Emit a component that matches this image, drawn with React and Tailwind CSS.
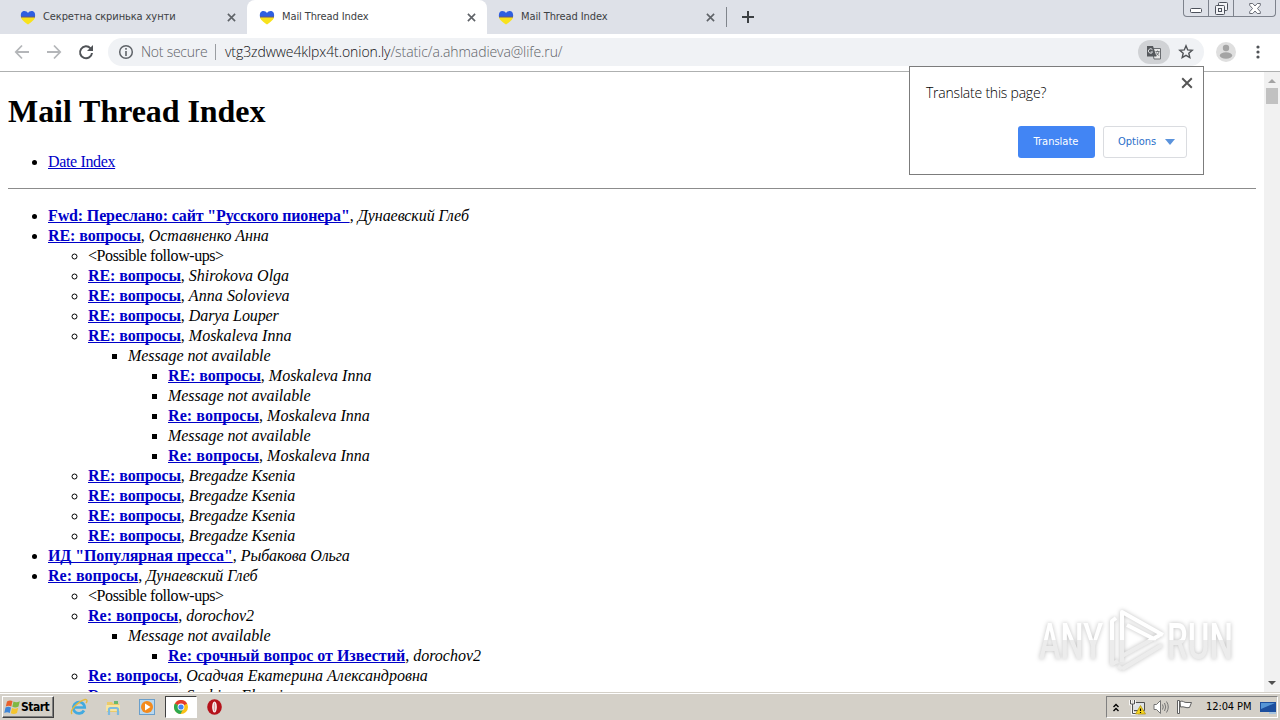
import React from 'react';

const tabs = [
  { title: 'Секретна скринька хунти', width: 'w-[239px]' },
  { title: 'Mail Thread Index', width: 'w-[240px] rounded-t-lg bg-white' },
  { title: 'Mail Thread Index', width: '-ml-px w-[240px]' }
];

const missing = 'Message not available';

const threads = [
  {
    subject: 'Fwd: Переслано: сайт "Русского пионера"',
    author: 'Дунаевский Глеб',
    spacing: 'tracking-[-0.14px]',
    authorSpacing: 'tracking-[-0.06px]'
  },
  {
    subject: 'RE: вопросы',
    author: 'Оставненко Анна',
    authorSpacing: 'tracking-[-0.06px]',
    replies: [
      { text: '<Possible follow-ups>' },
      { subject: 'RE: вопросы', author: 'Shirokova Olga' },
      { subject: 'RE: вопросы', author: 'Anna Solovieva', authorSpacing: 'tracking-[0.06px]' },
      { subject: 'RE: вопросы', author: 'Darya Louper', authorSpacing: 'tracking-[-0.1px]' },
      {
        subject: 'RE: вопросы',
        author: 'Moskaleva Inna',
        replies: [
          {
            note: missing,
            replies: [
              { subject: 'RE: вопросы', author: 'Moskaleva Inna' },
              { note: missing },
              { subject: 'Re: вопросы', author: 'Moskaleva Inna', spacing: 'tracking-[0.08px]' },
              { note: missing },
              { subject: 'Re: вопросы', author: 'Moskaleva Inna', spacing: 'tracking-[0.08px]' }
            ]
          }
        ]
      },
      { subject: 'RE: вопросы', author: 'Bregadze Ksenia', authorSpacing: 'tracking-[-0.13px]' },
      { subject: 'RE: вопросы', author: 'Bregadze Ksenia', authorSpacing: 'tracking-[-0.13px]' },
      { subject: 'RE: вопросы', author: 'Bregadze Ksenia', authorSpacing: 'tracking-[-0.13px]' },
      { subject: 'RE: вопросы', author: 'Bregadze Ksenia', authorSpacing: 'tracking-[-0.13px]' }
    ]
  },
  { subject: 'ИД "Популярная пресса"', author: 'Рыбакова Ольга', authorSpacing: 'tracking-[-0.1px]' },
  {
    subject: 'Re: вопросы',
    author: 'Дунаевский Глеб',
    spacing: 'tracking-normal',
    authorSpacing: 'tracking-[-0.06px]',
    replies: [
      { text: '<Possible follow-ups>' },
      {
        subject: 'Re: вопросы',
        author: 'dorochov2',
        spacing: 'tracking-normal',
        replies: [
          {
            note: missing,
            replies: [
              { subject: 'Re: срочный вопрос от Известий', author: 'dorochov2', spacing: 'tracking-normal' }
            ]
          }
        ]
      },
      { subject: 'Re: вопросы', author: 'Осадчая Екатерина Александровна', spacing: 'tracking-normal' },
      { subject: 'Re: вопросы', author: 'Sechina Elenai', spacing: 'tracking-normal' }
    ]
  }
];

const listStyles = ['list-disc', 'list-[circle]', 'list-[square]', 'list-[square]'];

const ThreadList = ({ items, depth = 0 }) => (
  <ul className={`pl-10 ${listStyles[depth]}`}>
    {items.map((item, index) => (
      <li key={index} className="whitespace-nowrap">
        {item.text && <span className="tracking-[-0.43px]">{item.text}</span>}
        {item.note && <em className="tracking-[-0.07px]">{item.note}</em>}
        {item.subject && (
          <>
            <a
              className={`font-bold text-[#0000c8] underline [text-decoration-skip-ink:none] ${item.spacing || 'tracking-[-0.09px]'}`}
            >
              {item.subject}
            </a>
            , <em className={item.authorSpacing}>{item.author}</em>
          </>
        )}
        {item.replies && <ThreadList items={item.replies} depth={depth + 1} />}
      </li>
    ))}
  </ul>
);

const HeartIcon = () => (
  <svg width="16" height="16" viewBox="0 0 16 16" className="shrink-0">
    <path d="M8 15.500C4 12.500 1 10.500 1 8h14c0 2.500-3 4.500-7 7.500z" fill="#f8e21c" />
    <path d="M1 8C.3 4 2 2 4.300 2 6 2 7.300 2.800 8 4c.7-1.200 2-2 3.700-2C14 2 15.700 4 15 8z" fill="#2f5fe0" />
    <path d="M1 7.500h14v1H1z" fill="#6a5a78" />
  </svg>
);

const CloseIcon = ({ size = 9, color = '#5f6368', weight = 1.8 }) => (
  <svg width={size} height={size} viewBox="0 0 10 10" className="shrink-0">
    <path d="M1 1l8 8M9 1L1 9" stroke={color} strokeWidth={weight} />
  </svg>
);

const Tab = ({ title, width }) => (
  <div className={`flex h-[34px] items-center pl-3 pr-[11px] ${width}`}>
    <HeartIcon />
    <span className="ml-[7px] flex-1 whitespace-nowrap pt-px text-[11px] tracking-[-0.1px] text-[#3c4043]">{title}</span>
    <CloseIcon />
  </div>
);

const WindowButtons = () => (
  <div className="ml-auto mr-[4px] flex h-[17px] self-start rounded-b-[4px] border border-t-0 border-[#7d828c]">
    <div className="flex w-[25px] items-center justify-center border-r border-[#7d828c]">
      <svg width="12" height="14" viewBox="0 0 12 14">
        <rect x=".5" y="7.500" width="11" height="4" rx="1" fill="#fff" stroke="#4c515b" />
      </svg>
    </div>
    <div className="flex w-[25px] items-center justify-center border-r border-[#7d828c]">
      <svg width="13" height="13" viewBox="0 0 13 13" fill="#f2f3f6" stroke="#4c515b">
        <rect x="3.500" y=".5" width="9" height="8" rx="1" />
        <rect x=".5" y="3.500" width="9" height="9" rx="1" />
        <rect x="3.500" y="6.500" width="3" height="3" />
      </svg>
    </div>
    <div className="flex w-[41px] items-center justify-center">
      <svg width="12" height="11" viewBox="0 0 12 11">
        <path
          d="M.7.500h3L6 3l2.300-2.500h3v1.800L8.500 5.500l2.800 3.200v1.800h-3L6 8l-2.300 2.500h-3V8.700l2.800-3.200L.7 2.300z"
          fill="#fff"
          stroke="#5b606a"
          strokeWidth=".9"
        />
      </svg>
    </div>
  </div>
);

const Toolbar = () => (
  <div className="flex h-[38px] items-center border-b border-[#aeb0b0] bg-white pb-px pl-[14px] pr-[16px]">
    <svg width="82" height="18" viewBox="0 0 82 18" fill="none" strokeWidth="1.800" className="shrink-0">
      <path d="M15 9H2M8 2.500L1.800 9 8 15.500" stroke="#b4b6b9" />
      <path d="M33 9h13M40 2.500L46.200 9 40 15.500" stroke="#b4b6b9" />
      <path d="M76.500 5.300A6 6 0 1 0 78 10" stroke="#505357" strokeWidth="2" />
      <path d="M79 2v6h-6z" fill="#505357" />
    </svg>
    <div className="ml-[12px] flex h-[28px] w-[1096px] items-center rounded-full bg-[#f0f2f5] pl-[10px]">
      <svg width="16" height="16" viewBox="0 0 16 16" className="shrink-0">
        <circle cx="8" cy="8" r="6.300" fill="none" stroke="#5f6368" strokeWidth="1.500" />
        <path d="M8 4v1.800M8 7v5" stroke="#5f6368" strokeWidth="1.600" />
      </svg>
      <span className="ml-[7px] w-[67px] whitespace-nowrap pb-px font-['Open_Sans','Noto_Sans',sans-serif] text-[14px] font-light tracking-[-0.25px] text-[#5f6368]">
        Not secure
      </span>
      <span className="ml-[7px] h-4 w-px bg-[#9a9da1]" />
      <span className="ml-[9px] whitespace-nowrap pb-px font-['Open_Sans','Noto_Sans',sans-serif] text-[14px] font-light tracking-[-0.08px] text-[#5f6368]">
        <span className="text-[#101114]">vtg3zdwwe4klpx4t.onion.ly</span>/static/a.ahmadieva@life.ru/
      </span>
      <span className="ml-auto flex h-6 w-8 items-center justify-center rounded-full bg-[#d0d2d5]">
        <svg width="16" height="15" viewBox="0 0 16 15">
          <path d="M6 3.500h8.500v10.500H8z" fill="#e8e8e8" stroke="#6a6d71" />
          <path d="M1 1h6l3.500 10.500H1z" fill="#55585c" />
          <path d="M6.500 4.800A2.200 2.200 0 1 0 6.600 7H4.700" fill="none" stroke="#e1e3e6" />
          <path d="M9.500 6.500h4M11.500 5.500v1M13 6.500c-.3 2-1.500 3.300-3 4M10.500 7.500c.5 1.500 1.500 2.500 2.700 3" fill="none" stroke="#6a6d71" strokeWidth=".9" />
        </svg>
      </span>
      <svg width="16" height="16" viewBox="0 0 16 16" className="ml-2 mr-[10px]">
        <path
          d="M8 1.800l1.700 4.100 4.500.4-3.400 2.900 1 4.400L8 11.300l-3.800 2.300 1-4.400-3.400-2.900 4.500-.4z"
          fill="none"
          stroke="#505357"
          strokeWidth="1.400"
        />
      </svg>
    </div>
    <svg width="20" height="20" viewBox="0 0 20 20" className="ml-[12px]">
      <circle cx="10" cy="10" r="10" fill="#dfdfdf" />
      <circle cx="10" cy="6" r="3.200" fill="#a4a4a4" />
      <ellipse cx="10" cy="13.500" rx="6.200" ry="3.300" fill="#a4a4a4" />
    </svg>
    <svg width="4" height="14" viewBox="0 0 4 14" fill="#505357" className="ml-auto mr-[4px]">
      <circle cx="2" cy="2" r="1.600" />
      <circle cx="2" cy="7" r="1.600" />
      <circle cx="2" cy="12" r="1.600" />
    </svg>
  </div>
);

const TranslatePopup = () => (
  <div className="absolute left-[909px] top-[66px] flex h-[109px] w-[295px] flex-col border border-[#7c7c7c] bg-white">
    <div className="flex h-[36px] items-start justify-between pl-[16px] pr-[10px] pt-[10px]">
      <span className="mt-[6px] font-['Open_Sans','Noto_Sans',sans-serif] text-[14px] font-light leading-5 tracking-[-0.22px] text-black">
        Translate this page?
      </span>
      <CloseIcon size={12} color="#555" weight={1.6} />
    </div>
    <div className="mt-[23px] flex justify-end gap-2 pr-4 text-[11px]">
      <button className="h-8 w-[77px] rounded-[3px] bg-[#4285f4] pr-px text-white">Translate</button>
      <button className="flex h-8 w-[84px] items-center justify-between rounded-[3px] border border-[#dadce0] pl-[14px] pr-[11px] text-[#2a6fc9]">
        Options
        <svg width="10" height="6" viewBox="0 0 10 6">
          <path d="M0 0h10L5 6z" fill="#5a93dc" />
        </svg>
      </button>
    </div>
  </div>
);

const Scrollbar = () => (
  <div className="flex w-4 shrink-0 flex-col items-center bg-[#f1f1f1]">
    <svg width="16" height="16" viewBox="0 0 16 16">
      <path d="M4 11h8L8 7z" fill="#a3a3a3" />
    </svg>
    <div className="h-4 w-3 bg-[#c1c1c1]" />
    <svg width="16" height="16" viewBox="0 0 16 16" className="mt-auto">
      <path d="M4 5h8L8 9z" fill="#505050" />
    </svg>
  </div>
);

const Watermark = () => (
  <svg
    width="210"
    height="80"
    viewBox="0 0 210 80"
    className="absolute left-[1030px] top-[600px] drop-shadow-[0_0_2px_rgba(0,0,0,0.25)]"
  >
    <defs>
      <linearGradient id="split" gradientUnits="userSpaceOnUse" x1="0" y1="0" x2="0" y2="80">
        <stop offset=".5" stopColor="#ffffff" />
        <stop offset=".5" stopColor="#ececec" />
      </linearGradient>
    </defs>
    <g fill="url(#split)" fontSize="50" fontWeight="500" fontFamily="Roboto, 'Liberation Sans', sans-serif">
      <text x="9" y="59" textLength="64" lengthAdjust="spacingAndGlyphs">ANY</text>
      <text x="137" y="59" textLength="66" lengthAdjust="spacingAndGlyphs">RUN</text>
    </g>
    <g fill="none" stroke="url(#split)" strokeWidth="4" strokeLinejoin="round">
      <path d="M92 56V12l41 23M97 25l29 15M92 56l38-21" />
      <path d="M86 18l-4 3v43l6-3M92 69l40-24M92 62V18M92 69l-4-3" />
    </g>
  </svg>
);

const StartFlag = () => (
  <svg width="17" height="16" viewBox="0 0 17 16">
    <path d="M3 2.500C5 1 7 1.200 8.500 2L7.300 7.500C5.500 6.500 3.700 6.600 1.800 7.500z" fill="#e8602c" />
    <path d="M9.500 2.500c2 1 4 1 6.300-.3L14.500 7.500c-2 1.200-4 1.200-6.200.3z" fill="#7fb842" />
    <path d="M1.500 8.500c2-1 3.700-1 5.500 0L5.800 14C4 13 2.200 13 .3 14z" fill="#3f86d8" />
    <path d="M8 9c2 1 4 1 6.200-.2L13 14c-2 1.200-4.200 1.200-6.200.3z" fill="#f5c52e" />
  </svg>
);

const IeIcon = () => (
  <svg width="18" height="18" viewBox="0 0 18 18" fill="none">
    <path d="M14 12.500A5.700 5.700 0 1 1 14.700 9.500H4" stroke="#42aae0" strokeWidth="2.700" />
    <path d="M2 16C-1 12 9 3 15 1.500c3-.5 2 2.500 1 3.500" stroke="#e5b93c" strokeWidth="1.400" />
  </svg>
);

const ExplorerIcon = () => (
  <svg width="17" height="17" viewBox="0 0 17 17">
    <path d="M2 3h5l1 1.500h6V13H2z" fill="#eccb6a" />
    <path d="M9 2h4v3H9z" fill="#69b86c" />
    <path d="M1 6h14v6H1z" fill="#f7e5a1" />
    <path d="M4 16v-5.500q0-1.500 1.500-1.500h6q1.500 0 1.500 1.500V16" fill="none" stroke="#7dbbe0" strokeWidth="2.200" />
  </svg>
);

const MediaIcon = () => (
  <svg width="16" height="16" viewBox="0 0 16 16">
    <rect x=".5" y=".5" width="15" height="15" fill="#b9d8ef" stroke="#6a9fcb" />
    <circle cx="8" cy="8" r="6" fill="#f38a1d" />
    <path d="M6 4.500v7L11.500 8z" fill="#fff" />
  </svg>
);

const ChromeIcon = () => (
  <svg width="14" height="14" viewBox="0 0 14 14">
    <circle cx="7" cy="7" r="7" fill="#fbc116" />
    <path d="M7 7L.9 3.500A7 7 0 0 1 13.100 3.500z" fill="#e33b2e" />
    <path d="M7 7L.9 3.500A7 7 0 0 0 6.500 14l3-5.500z" fill="#2da94f" />
    <circle cx="7" cy="7" r="3.400" fill="#fff" />
    <circle cx="7" cy="7" r="2.600" fill="#4285f4" />
  </svg>
);

const OperaIcon = () => (
  <svg width="15" height="16" viewBox="0 0 15 16">
    <ellipse cx="7.500" cy="8" rx="7.300" ry="7.800" fill="#b5121b" />
    <ellipse cx="7.500" cy="8" rx="2.300" ry="5.600" fill="#fff" />
    <ellipse cx="7.500" cy="8" rx=".9" ry="4.600" fill="#dba3a5" />
  </svg>
);

const Taskbar = () => (
  <div className="flex h-[28px] shrink-0 items-end border-t border-[#d4d0c8] bg-[#d4d0c8]">
    <div className="flex h-[27px] w-full items-center border-t border-white px-[2px]">
      <div className="flex h-[22px] w-[52px] items-center border border-b-[#404040] border-l-white border-r-[#404040] border-t-white pl-px shadow-[inset_-1px_-1px_#808080]">
        <StartFlag />
        <span className="text-[12px] font-bold tracking-[-0.5px] text-black">Start</span>
      </div>
      <div className="ml-[16px] flex w-[18px] justify-center"><IeIcon /></div>
      <div className="ml-[16px] flex w-[18px] justify-center"><ExplorerIcon /></div>
      <div className="ml-[16px] flex w-[18px] justify-center"><MediaIcon /></div>
      <div className="ml-[9px] flex h-[22px] w-[32px] items-center justify-center border border-b-white border-l-[#404040] border-r-white border-t-[#404040] bg-white">
        <ChromeIcon />
      </div>
      <div className="ml-[10px]"><OperaIcon /></div>
      <div className="ml-auto flex h-[22px] w-[172px] items-center border border-b-white border-l-[#808080] border-r-white border-t-[#808080] pl-[5px]">
        <svg width="8" height="9" viewBox="0 0 8 9" fill="none" stroke="#000" strokeWidth="1.400">
          <path d="M1.500 4L4 1.500 6.500 4M1.500 8L4 5.500 6.500 8" />
        </svg>
        <svg width="17" height="16" viewBox="0 0 17 16" className="ml-[9px]">
          <path d="M4.500 3.500h11v8h-11z" fill="#dfe3e6" stroke="#505050" />
          <path d="M1.500 1v4h4V1M3.500 5v9.500H9" fill="none" stroke="#fff" strokeWidth="2.600" />
          <path d="M1.500 1v4h4V1M3.500 5v9.500H9" fill="none" stroke="#505050" />
          <path d="M11.500 6.500L16.500 15h-10z" fill="#f7d51d" stroke="#a88b12" strokeWidth=".7" />
          <path d="M11.500 9.500v2.500M11.500 13v1" stroke="#000" strokeWidth="1.200" />
        </svg>
        <svg width="17" height="16" viewBox="0 0 17 16" fill="none" stroke="#747474" className="ml-[7px]">
          <path d="M1 5.500h2.500L7.500 1.500v13L3.500 10.500H1z" fill="#fff" />
          <path d="M9.500 5.500q1.500 2.500 0 5M11.500 4q2.500 4 0 8M13.500 2.500q3.500 5.500 0 11" />
        </svg>
        <svg width="17" height="16" viewBox="0 0 17 16" fill="#fff" stroke="#606060" className="ml-[6px]">
          <path d="M4 2.500c3-1.500 4 1.500 7 1h4.500l-2 5c-4 1-5-1.500-9-.5z" />
          <path d="M1.500 1.500h2v13h-2z" />
        </svg>
        <span className="ml-[13px] w-[46px] whitespace-nowrap pt-px text-[11px] tracking-[-0.1px] text-black">12:04 PM</span>
        <svg width="16" height="13" viewBox="0 0 16 13" className="ml-auto mr-px">
          <path d="M0 1h16v10H0z" fill="#1d4f9e" />
          <path d="M1 2h14L1 8z" fill="#5595d6" />
          <path d="M9 11h7v2H9z" fill="#a6c4df" />
        </svg>
      </div>
    </div>
  </div>
);

const App = () => (
  <div className="relative flex h-[720px] w-[1280px] flex-col overflow-hidden bg-white font-['DejaVu_Sans_Condensed','DejaVu_Sans',sans-serif]">
    <div className="flex h-[34px] shrink-0 items-center bg-[#dee1e8] pl-2">
      {tabs.map((tab, index) => (
        <Tab key={index} {...tab} />
      ))}
      <span className="h-5 w-px bg-[#80858c]" />
      <svg width="12" height="12" viewBox="0 0 12 12" className="ml-[15px]">
        <path d="M6 0v12M0 6h12" stroke="#3c4043" strokeWidth="2" />
      </svg>
      <WindowButtons />
    </div>
    <Toolbar />
    <div className="flex min-h-0 flex-1">
      <div className="min-w-0 flex-1 overflow-hidden px-2 font-['Liberation_Serif',serif] text-[16px] leading-5 text-black">
        <h1 className="mt-[21px] text-[32px] font-bold leading-[37px] tracking-[-0.06px]">Mail Thread Index</h1>
        <ul className="mt-[22px] list-disc pl-10">
          <li>
            <a className="tracking-[-0.35px] text-[#0000c8] underline">Date Index</a>
          </li>
        </ul>
        <hr className="mb-[17px] mt-4 border-t border-[#8c8c8c]" />
        <ThreadList items={threads} />
      </div>
      <Scrollbar />
    </div>
    <Taskbar />
    <TranslatePopup />
    <Watermark />
  </div>
);

export default App;
